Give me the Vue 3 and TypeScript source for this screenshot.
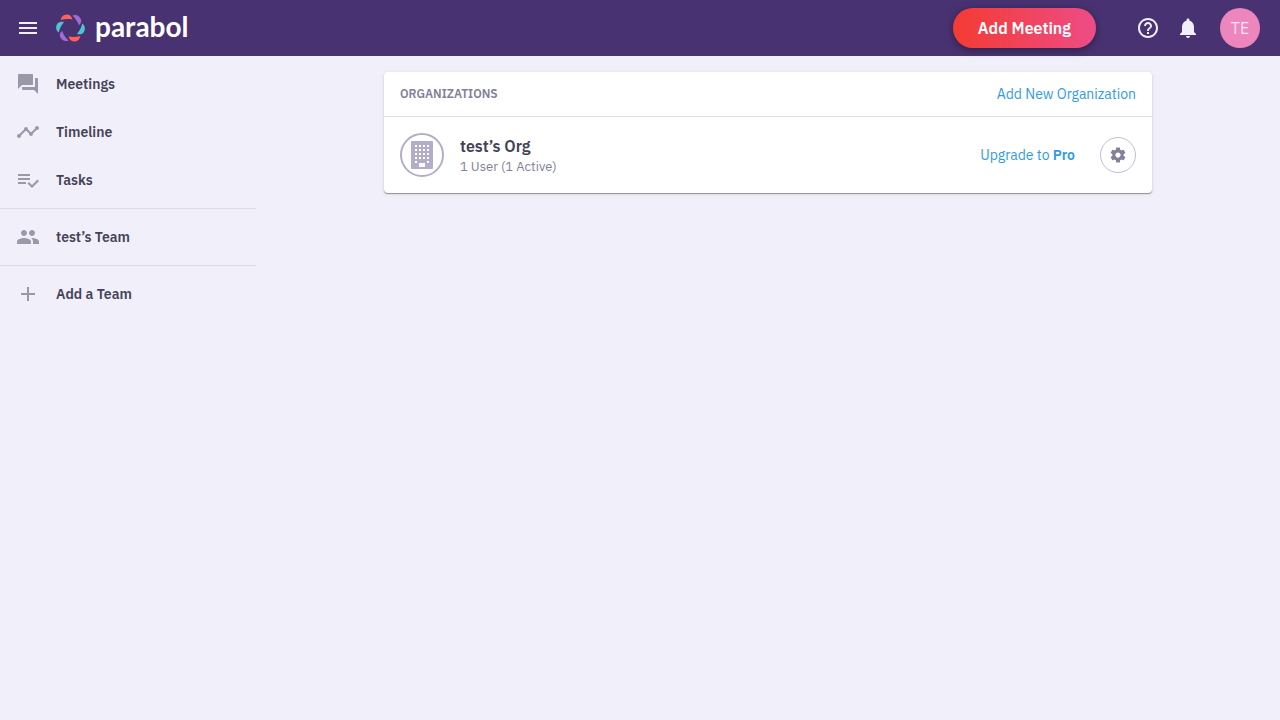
<script setup lang="ts">
interface NavItem {
  label: string
  paths: string[]
}

const groups: NavItem[][] = [
  [
    {
      label: 'Meetings',
      paths: [
        'M21 6h-2v9H6v2c0 .55.45 1 1 1h11l4 4V7c0-.55-.45-1-1-1zm-4 6V3c0-.55-.45-1-1-1H3c-.55 0-1 .45-1 1v14l4-4h10c.55 0 1-.45 1-1z',
      ],
    },
    {
      label: 'Timeline',
      paths: [
        'M23 8c0 1.100-.9 2-2 2-.18 0-.35-.02-.51-.07l-3.560 3.550c.05.16.07.34.07.52 0 1.100-.9 2-2 2s-2-.9-2-2c0-.18.02-.36.07-.52l-2.550-2.550c-.16.05-.34.07-.52.07s-.36-.02-.52-.07l-4.550 4.560c.05.16.07.33.07.51 0 1.100-.9 2-2 2s-2-.9-2-2 .9-2 2-2c.18 0 .35.02.51.07l4.560-4.550C8.020 9.360 8 9.180 8 9c0-1.100.9-2 2-2s2 .9 2 2c0 .18-.02.36-.07.52l2.550 2.550c.16-.05.34-.07.52-.07s.36.02.52.07l3.550-3.560C19.020 8.350 19 8.180 19 8c0-1.100.9-2 2-2s2 .9 2 2z',
      ],
    },
    {
      label: 'Tasks',
      paths: [
        'M14 10H2v2h12v-2zm0-4H2v2h12V6zM2 16h8v-2H2v2zm19.500-4.500L23 13l-6.990 7-4.510-4.500L13 14l3.010 3 5.490-5.500z',
      ],
    },
  ],
  [
    {
      label: 'test’s Team',
      paths: [
        'M16 11c1.660 0 2.990-1.340 2.990-3S17.660 5 16 5s-3 1.340-3 3 1.340 3 3 3zm-8 0c1.660 0 2.990-1.340 2.990-3S9.660 5 8 5 5 6.340 5 8s1.340 3 3 3zm0 2c-2.330 0-7 1.170-7 3.500V19h14v-2.500c0-2.330-4.670-3.500-7-3.500zm8 0c-.29 0-.62.02-.97.05 1.160.84 1.970 1.970 1.970 3.450V19h6v-2.500c0-2.330-4.670-3.500-7-3.500z',
      ],
    },
  ],
  [{ label: 'Add a Team', paths: ['M19 13h-6v6h-2v-6H5v-2h6V5h2v6h6v2z'] }],
]

const petals = [
  { color: '#fd6157', angle: 0 },
  { color: '#a06bd6', angle: 60 },
  { color: '#50c4d3', angle: 120 },
  { color: '#fd6157', angle: 180 },
  { color: '#a06bd6', angle: 240 },
  { color: '#50c4d3', angle: 300 },
]

const windows = [0, 1, 2, 3, 4].flatMap((row) =>
  [0, 1, 2, 3]
    .filter((col) => row < 4 || col === 0 || col === 3)
    .map((col) => ({ x: 4 + col * 4, y: 4 + row * 4 })),
)
</script>

<template>
  <div class="page">
    <header class="topbar">
      <button class="icon-button" type="button" aria-label="Toggle menu">
        <svg viewBox="0 0 24 24" class="icon"><path d="M3 18h18v-2H3v2zm0-5h18v-2H3v2zm0-7v2h18V6H3z" /></svg>
      </button>
      <a class="brand" href="#">
        <svg class="brand-mark" viewBox="-14.500 -15 30 30" aria-hidden="true">
          <path
            v-for="petal in petals"
            :key="petal.angle"
            :fill="petal.color"
            :transform="`rotate(${petal.angle})`"
            d="M-9.800 -7.900C-9.300 -11 -7.600 -13.300 -3.600 -13.500C-.8 -13.600 1 -12 1.900 -8.600C-1.500 -9.300 -6 -9.200 -9.800 -7.900Z"
          />
        </svg>
        <span class="brand-name">parabol</span>
      </a>
      <div class="actions">
        <button class="add-meeting" type="button">Add Meeting</button>
        <div class="tools">
          <button class="icon-button" type="button" aria-label="Help">
            <svg viewBox="0 0 24 24" class="icon"><path d="M11 18h2v-2h-2v2zm1-16C6.480 2 2 6.480 2 12s4.480 10 10 10 10-4.480 10-10S17.520 2 12 2zm0 18c-4.410 0-8-3.590-8-8s3.590-8 8-8 8 3.590 8 8-3.590 8-8 8zm0-14c-2.210 0-4 1.790-4 4h2c0-1.100.9-2 2-2s2 .9 2 2c0 2-3 1.750-3 5h2c0-2.250 3-2.500 3-5 0-2.210-1.790-4-4-4z" /></svg>
          </button>
          <button class="icon-button" type="button" aria-label="Notifications">
            <svg viewBox="0 0 24 24" class="icon"><path d="M12 22c1.100 0 2-.9 2-2h-4c0 1.100.89 2 2 2zm6-6v-5c0-3.070-1.640-5.640-4.500-6.320V4c0-.83-.67-1.500-1.500-1.500s-1.500.67-1.500 1.500v.68C7.630 5.360 6 7.920 6 11v5l-2 2v1h16v-1l-2-2z" /></svg>
          </button>
        </div>
        <button class="avatar" type="button" aria-label="Account">TE</button>
      </div>
    </header>

    <div class="body">
      <nav class="sidebar">
        <ul v-for="(group, index) in groups" :key="index" class="nav-group">
          <li v-for="item in group" :key="item.label">
            <a class="nav-link" href="#">
              <svg viewBox="0 0 24 24" class="icon nav-icon"><path v-for="d in item.paths" :key="d" :d="d" /></svg>
              <span>{{ item.label }}</span>
            </a>
          </li>
        </ul>
      </nav>

      <main class="content">
        <section class="panel">
          <div class="panel-header">
            <h1 class="panel-title">ORGANIZATIONS</h1>
            <a class="link" href="#">Add New Organization</a>
          </div>
          <div class="org-row">
            <span class="org-picture">
              <svg class="building" viewBox="0 0 22 28" aria-hidden="true">
                <rect width="22" height="28" rx="1" fill="#b4adc9" />
                <rect v-for="w in windows" :key="`${w.x}-${w.y}`" :x="w.x" :y="w.y" width="2" height="2" fill="#fff" />
                <rect x="8" y="22" width="6" height="4" fill="#fff" />
              </svg>
            </span>
            <div class="org-info">
              <a class="org-name" href="#">test’s Org</a>
              <span class="org-users">1 User (1 Active)</span>
            </div>
            <a class="link" href="#">Upgrade to <b>Pro</b></a>
            <button class="settings" type="button" aria-label="Organization settings">
              <svg viewBox="0 0 24 24" class="gear"><path d="M19.430 12.980c.04-.32.07-.64.07-.98s-.03-.66-.07-.98l2.110-1.650c.19-.15.24-.42.12-.64l-2-3.460c-.12-.22-.39-.3-.61-.22l-2.490 1c-.52-.4-1.080-.73-1.690-.98l-.38-2.650C14.460 2.180 14.250 2 14 2h-4c-.25 0-.46.18-.49.42l-.38 2.650c-.61.25-1.170.59-1.690.98l-2.490-1c-.23-.09-.49 0-.61.22l-2 3.460c-.13.22-.07.49.12.64l2.110 1.650c-.04.32-.07.65-.07.98s.03.66.07.98l-2.110 1.650c-.19.15-.24.42-.12.64l2 3.460c.12.22.39.3.61.22l2.490-1c.52.4 1.080.73 1.690.98l.38 2.650c.03.24.24.42.49.42h4c.25 0 .46-.18.49-.42l.38-2.650c.61-.25 1.170-.59 1.690-.98l2.490 1c.23.09.49 0 .61-.22l2-3.460c.12-.22.07-.49-.12-.64l-2.110-1.650zM12 15.500c-1.930 0-3.500-1.570-3.500-3.500s1.570-3.500 3.500-3.500 3.500 1.570 3.500 3.500-1.570 3.500-3.500 3.500z" /></svg>
            </button>
          </div>
        </section>
      </main>
    </div>
  </div>
</template>

<style>
body {
  background: #f1f0fa;
}
</style>

<style scoped>
.page {
  min-height: 100vh;
  display: flex;
  flex-direction: column;
  background: #f1f0fa;
  color: #444258;
  font-family: "IBM Plex Sans", Roboto, "Liberation Sans", sans-serif;
  font-size: 14px;
  line-height: 20px;
}

.page *,
.page {
  box-sizing: border-box;
}

button {
  padding: 0;
  border: 0;
  background: none;
  color: inherit;
  font: inherit;
  cursor: pointer;
}

a {
  text-decoration: none;
}

svg {
  display: block;
  flex: none;
}

.icon {
  width: 24px;
  height: 24px;
  fill: currentColor;
}

.topbar {
  display: flex;
  align-items: center;
  min-height: 56px;
  padding: 0 20px 0 16px;
  background: #493272;
  color: #f1f0fa;
}

.brand {
  display: flex;
  align-items: center;
  gap: 9px;
  margin-left: 16px;
  color: #fff;
}

.brand-mark {
  width: 30px;
  height: 30px;
}

.brand-name {
  padding-bottom: 4px;
  font-family: Lato, sans-serif;
  font-size: 28px;
  font-weight: 700;
  line-height: 32px;
}

.actions {
  display: flex;
  align-items: center;
  margin-left: auto;
}

.add-meeting {
  height: 40px;
  padding: 0 25px;
  border-radius: 20px;
  background: linear-gradient(to right, #f43b33, #ed4c86);
  box-shadow: 0 2px 8px rgba(0, 0, 0, 0.4);
  color: #fff;
  font-size: 16px;
  font-weight: 600;
}

.tools {
  display: flex;
  gap: 16px;
  margin: 0 20px 0 40px;
}

.avatar {
  width: 40px;
  height: 40px;
  border-radius: 50%;
  background: #ed86bd;
  color: #f6e2f2;
  font-size: 16px;
  font-weight: 400;
}

.body {
  display: flex;
  flex: 1;
}

.sidebar {
  flex: none;
  width: 256px;
}

.nav-group {
  margin: 0;
  padding: 4px 0;
  list-style: none;
}

.nav-group + .nav-group {
  border-top: 1px solid #dddaf0;
}

.nav-link {
  display: flex;
  align-items: center;
  gap: 16px;
  height: 48px;
  padding: 0 16px;
  color: #444258;
  font-weight: 600;
}

.nav-icon {
  color: #9c98aa;
}

.content {
  flex: 1;
  padding: 16px;
}

.panel {
  max-width: 768px;
  margin: 0 auto;
  border-radius: 4px;
  background: #fff;
  box-shadow: 0 1px 1px rgba(0, 0, 0, 0.36), 0 1px 4px rgba(68, 66, 88, 0.12);
}

.panel-header {
  display: flex;
  align-items: center;
  justify-content: space-between;
  padding: 12px 16px;
  border-bottom: 1px solid #dddaf0;
}

.panel-title {
  margin: 0;
  color: #82809a;
  font-size: 12px;
  font-weight: 600;
  line-height: 20px;
}

.link {
  color: #329ae5;
}

.link b {
  font-weight: 600;
}

.org-row {
  display: flex;
  align-items: center;
  padding: 16px;
}

.org-picture {
  display: grid;
  place-items: center;
  width: 44px;
  height: 44px;
  border: 2px solid #b4adc9;
  border-radius: 50%;
}

.building {
  width: 22px;
  height: 28px;
}

.org-info {
  display: flex;
  flex: 1;
  flex-direction: column;
  align-items: flex-start;
  margin-left: 16px;
}

.org-name {
  color: #444258;
  font-size: 16px;
  font-weight: 600;
  line-height: 24px;
}

.org-users {
  color: #82809a;
  font-size: 13px;
  line-height: 18px;
}

.settings {
  display: grid;
  place-items: center;
  width: 36px;
  height: 36px;
  margin-left: 25px;
  border: 1px solid #c3bdd6;
  border-radius: 50%;
  color: #82809a;
}

.gear {
  width: 18px;
  height: 18px;
  fill: currentColor;
}
</style>
